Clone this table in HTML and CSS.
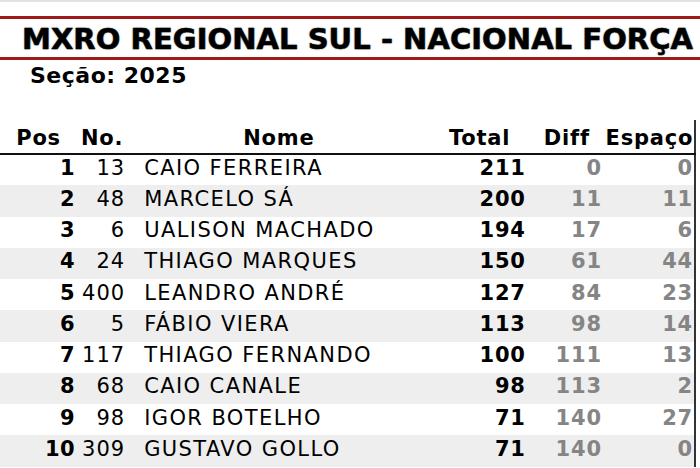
FILE: index.html
```html
<!DOCTYPE html>
<html lang="pt">
<head>
<meta charset="utf-8">
<link rel="stylesheet" href="styles.css">
</head>
<body>
<div class="topbar"></div>
<div class="page">
  <h1 class="title">MXRO REGIONAL SUL - NACIONAL FORÇA</h1>
  <h2 class="season">Seção: 2025</h2>
  <table class="results">
    <colgroup>
      <col class="c-pos"><col class="c-no"><col class="c-name"><col class="c-total"><col class="c-diff"><col class="c-gap">
    </colgroup>
    <thead>
      <tr><th>Pos</th><th>No.</th><th>Nome</th><th>Total</th><th>Diff</th><th>Espaço</th></tr>
    </thead>
    <tbody>
      <tr><td class="pos">1</td><td class="no">13</td><td class="name">CAIO FERREIRA</td><td class="total">211</td><td class="diff">0</td><td class="gap">0</td></tr>
      <tr><td class="pos">2</td><td class="no">48</td><td class="name">MARCELO SÁ</td><td class="total">200</td><td class="diff">11</td><td class="gap">11</td></tr>
      <tr><td class="pos">3</td><td class="no">6</td><td class="name">UALISON MACHADO</td><td class="total">194</td><td class="diff">17</td><td class="gap">6</td></tr>
      <tr><td class="pos">4</td><td class="no">24</td><td class="name">THIAGO MARQUES</td><td class="total">150</td><td class="diff">61</td><td class="gap">44</td></tr>
      <tr><td class="pos">5</td><td class="no">400</td><td class="name">LEANDRO ANDRÉ</td><td class="total">127</td><td class="diff">84</td><td class="gap">23</td></tr>
      <tr><td class="pos">6</td><td class="no">5</td><td class="name">FÁBIO VIERA</td><td class="total">113</td><td class="diff">98</td><td class="gap">14</td></tr>
      <tr><td class="pos">7</td><td class="no">117</td><td class="name">THIAGO FERNANDO</td><td class="total">100</td><td class="diff">111</td><td class="gap">13</td></tr>
      <tr><td class="pos">8</td><td class="no">68</td><td class="name">CAIO CANALE</td><td class="total">98</td><td class="diff">113</td><td class="gap">2</td></tr>
      <tr><td class="pos">9</td><td class="no">98</td><td class="name">IGOR BOTELHO</td><td class="total">71</td><td class="diff">140</td><td class="gap">27</td></tr>
      <tr><td class="pos">10</td><td class="no">309</td><td class="name">GUSTAVO GOLLO</td><td class="total">71</td><td class="diff">140</td><td class="gap">0</td></tr>
    </tbody>
  </table>
</div>
</body>
</html>
```

FILE: styles.css
```css
html, body {
  margin: 0;
  padding: 0;
  background: #fff;
  overflow: hidden;
}
body {
  font-family: "DejaVu Sans", Verdana, sans-serif;
  color: #000;
  width: 700px;
  height: 468px;
}
.topbar {
  height: 2px;
  background: #e2e2e2;
}
.page {
  padding-top: 14px;
}
.title {
  margin: 0;
  width: 700px;
  box-sizing: border-box;
  border-top: 3px solid #9e1a1a;
  border-bottom: 3px solid #9e1a1a;
  padding: 6px 0 4px 22px;
  font-size: 29px;
  line-height: 28px;
  font-weight: bold;
  letter-spacing: 0.05px;
  white-space: nowrap;
  overflow: hidden;
  -webkit-text-stroke: 0.5px #000;
  text-shadow: 0 0 2px #888;
}
.season {
  margin: 2px 0 0 30px;
  font-size: 22px;
  line-height: 28px;
  font-weight: bold;
  letter-spacing: 0.5px;
}
.results {
  margin-top: 30px;
  border-collapse: collapse;
  width: 696px;
  table-layout: fixed;
  border-right: 2px solid #333;
}
.c-pos { width: 77px; }
.c-no { width: 50px; }
.c-name { width: 303px; }
.c-total { width: 98px; }
.c-diff { width: 76px; }
.c-gap { width: 90px; }
.results th {
  font-size: 21px;
  font-weight: bold;
  text-align: center;
  line-height: 26px;
  letter-spacing: 0.8px;
  padding: 5px 0 2px;
  border-bottom: 2px solid #111;
  white-space: nowrap;
}
.results td {
  font-size: 21px;
  line-height: 24px;
  height: 31.25px;
  padding: 0 3px 4px;
  box-sizing: border-box;
  white-space: nowrap;
  text-align: right;
}
.results tbody tr:nth-child(even) td {
  background: #eeeeee;
}
.results td.pos { font-weight: bold; padding-right: 2px; letter-spacing: 0.5px; }
.results td.no { padding-right: 2px; letter-spacing: 1px; }
.results td.name { text-align: left; padding-left: 17px; letter-spacing: 1.4px; }
.results td.total { font-weight: bold; padding-right: 3px; letter-spacing: 0.8px; }
.results td.diff { font-weight: bold; color: #858585; padding-right: 3px; letter-spacing: 0.8px; }
.results td.gap { font-weight: bold; color: #858585; padding-right: 1px; letter-spacing: 0.8px; }
```
